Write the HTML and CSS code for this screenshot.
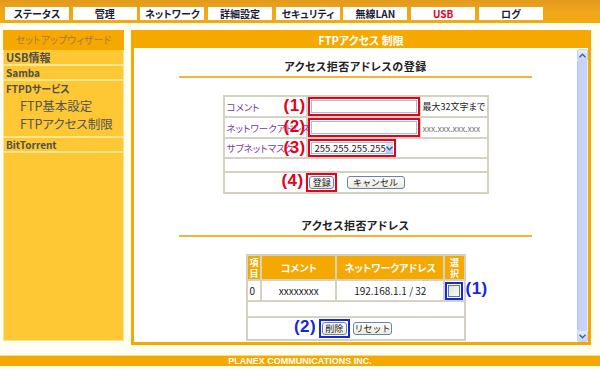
FILE: index.html
```html
<!DOCTYPE html>
<html lang="ja">

<head>
    <meta charset="UTF-8">
    <title>FTPアクセス制限</title>
    <link rel="stylesheet" href="styles.css">
</head>

<body>
    <div class="header">
        <span class="tab">ステータス</span>
        <span class="tab">管理</span>
        <span class="tab">ネットワーク</span>
        <span class="tab">詳細設定</span>
        <span class="tab">セキュリティ</span>
        <span class="tab">無線LAN</span>
        <span class="tab tab-active">USB</span>
        <span class="tab">ログ</span>
    </div>

    <div class="layout">
        <div class="sidebar">
            <div class="side-head">セットアップウィザード</div>
            <div class="side-item">USB情報</div>
            <div class="side-item">Samba</div>
            <div class="side-group">
                <div class="side-group-title">FTPDサービス</div>
                <div class="side-sub">FTP基本設定</div>
                <div class="side-sub">FTPアクセス制限</div>
            </div>
            <div class="side-item">BitTorrent</div>
        </div>

        <div class="panel">
            <div class="panel-title">FTPアクセス 制限</div>
            <div class="panel-body">
                <div class="content">
                    <div class="section-title">アクセス拒否アドレスの登録</div>
                    <table class="form-table">
                        <colgroup>
                            <col class="c-label">
                            <col class="c-field">
                            <col>
                        </colgroup>
                        <tr class="row-input">
                            <td class="label">コメント</td>
                            <td class="field">
                                <span class="num red">(1)</span>
                                <span class="mark-red"><input class="text-input" type="text"></span>
                            </td>
                            <td class="note">最大32文字まで</td>
                        </tr>
                        <tr class="row-input">
                            <td class="label">ネットワークアドレス</td>
                            <td class="field">
                                <span class="num red">(2)</span>
                                <span class="mark-red"><input class="text-input" type="text"></span>
                            </td>
                            <td class="note note-gray">xxx.xxx.xxx.xxx</td>
                        </tr>
                        <tr class="row-select">
                            <td class="label">サブネットマスク</td>
                            <td class="field" colspan="2">
                                <span class="num red">(3)</span>
                                <span class="mark-red">
                                    <span class="fake-select">
                                        <span class="fake-select-text">255.255.255.255</span>
                                        <span class="fake-select-arrow">
                                            <svg width="7" height="5" viewBox="0 0 7 5">
                                                <path d="M0.5 0.8 L3.5 3.8 L6.5 0.8" fill="none" stroke="#4d6185" stroke-width="1.5"/>
                                            </svg>
                                        </span>
                                    </span>
                                </span>
                            </td>
                        </tr>
                        <tr class="row-empty">
                            <td colspan="3"></td>
                        </tr>
                        <tr class="row-buttons">
                            <td colspan="3">
                                <span class="btn-wrap">
                                    <span class="num num-btn red">(4)</span>
                                    <span class="mark-red"><button class="btn btn-small">登録</button></span>
                                </span>
                                <button class="btn btn-cancel">キャンセル</button>
                            </td>
                        </tr>
                    </table>

                    <div class="section-title section-second">アクセス拒否アドレス</div>
                    <table class="list-table">
                        <tr class="list-head">
                            <th class="col-no">項<br>目</th>
                            <th class="col-comment">コメント</th>
                            <th class="col-addr">ネットワークアドレス</th>
                            <th class="col-sel">選<br>択</th>
                        </tr>
                        <tr class="list-row">
                            <td class="cell-no">0</td>
                            <td class="cell-center">xxxxxxxx</td>
                            <td class="cell-center">192.168.1.1 / 32</td>
                            <td class="cell-sel">
                                <span class="mark-blue"><span class="checkbox"></span></span>
                                <span class="num num-side blue">(1)</span>
                            </td>
                        </tr>
                        <tr class="list-empty">
                            <td colspan="4"></td>
                        </tr>
                        <tr class="list-buttons">
                            <td colspan="4">
                                <span class="btn-wrap">
                                    <span class="num num-btn blue">(2)</span>
                                    <span class="mark-blue"><button class="btn btn-small">削除</button></span>
                                </span>
                                <button class="btn btn-reset">リセット</button>
                            </td>
                        </tr>
                    </table>
                </div>

                <div class="scrollbar">
                    <div class="sb-btn">
                        <svg width="7" height="5" viewBox="0 0 7 5">
                            <path d="M0.5 4.2 L3.5 1.2 L6.5 4.2" fill="none" stroke="#4d6185" stroke-width="1.5"/>
                        </svg>
                    </div>
                    <div class="sb-track"></div>
                    <div class="sb-btn">
                        <svg width="7" height="5" viewBox="0 0 7 5">
                            <path d="M0.5 0.8 L3.5 3.8 L6.5 0.8" fill="none" stroke="#4d6185" stroke-width="1.5"/>
                        </svg>
                    </div>
                </div>
            </div>
        </div>
    </div>

    <div class="footer">PLANEX COMMUNICATIONS INC.</div>
</body>

</html>
```

FILE: styles.css
```css
body {
    margin: 0;
    background-color: #fffef2;
    font-family: "Noto Sans CJK JP", "Liberation Sans", sans-serif;
    font-feature-settings: "palt";
    color: #222;
}

/* top menu */
.header {
    height: 23px;
    box-sizing: border-box;
    padding: 7px 0 0 5px;
    display: flex;
    gap: 3.7px;
    background: linear-gradient(#e29a1c, #f2a818 60%, #f3a90f);
}

.tab {
    width: 64px;
    height: 13px;
    background: #fff;
    font-size: 10px;
    font-weight: bold;
    line-height: 13px;
    text-align: center;
    color: #1d1d3a;
}

.tab-active {
    color: #e0001e;
}

.layout {
    display: flex;
    gap: 7px;
    margin-top: 7px;
    padding-left: 3px;
}

/* left menu */
.sidebar {
    width: 121px;
    height: 311px;
    background: #fdc834;
    box-shadow: inset 0 0 0 1px #ffe28e;
}

.side-head {
    height: 20px;
    background: #f5a800;
    color: #a8784a;
    font-size: 10px;
    line-height: 20px;
    text-align: center;
}

.side-item,
.side-group {
    border-bottom: 2px solid #ffe58e;
    padding-left: 3px;
    color: #4f4f4f;
}

.side-item {
    font-size: 10px;
    font-weight: bold;
    line-height: 13px;
    height: 13px;
}

.side-item:nth-child(2) {
    height: 14px;
    line-height: 14px;
    font-size: 11px;
}

.side-group {
    height: 55px;
}

.side-group-title {
    font-size: 10px;
    font-weight: bold;
    line-height: 16px;
}

.side-sub {
    padding-left: 14px;
    font-size: 12.5px;
    line-height: 18px;
    color: #555;
}

/* main panel */
.panel {
    width: 460px;
    height: 315px;
    box-sizing: border-box;
    border: 3px solid #f5a800;
    display: flex;
    flex-direction: column;
}

.panel-title {
    height: 15px;
    background: #f5a800;
    color: #fff;
    font-size: 11px;
    font-weight: bold;
    line-height: 14px;
    text-align: center;
}

.panel-body {
    flex: 1;
    display: flex;
    background: #fff;
}

.content {
    flex: 1;
}

.section-title {
    width: 353px;
    margin: 0 auto 17px;
    padding: 11px 0 3px;
    border-bottom: 2px solid #f6b23a;
    font-size: 11px;
    font-weight: bold;
    line-height: 14px;
    text-align: center;
    letter-spacing: 0.5px;
}

.section-second {
    margin-top: 13px;
    margin-bottom: 17px;
}

/* registration form */
.form-table,
.list-table {
    margin: 0 auto;
    border-collapse: collapse;
    border: 2px solid #d6d2c2;
    font-size: 10px;
}

.form-table {
    width: 266px;
    table-layout: fixed;
}

.c-label {
    width: 83px;
}

.c-field {
    width: 113px;
}

.form-table td {
    border: 2px solid #d6d2c2;
    padding: 0;
}

.row-input td {
    height: 18px;
}

.row-select td {
    height: 16px;
}

.row-empty td {
    height: 12px;
}

.row-buttons td {
    height: 18px;
    text-align: center;
}

.label {
    padding-left: 2px !important;
    color: #7a3a98;
    font-size: 9.5px;
    white-space: nowrap;
}

.field {
    position: relative;
}

.note {
    padding-left: 2px !important;
    font-size: 9px;
    white-space: nowrap;
}

.note-gray {
    color: #777;
    font-size: 8.5px;
}

.num {
    position: absolute;
    font-family: "Liberation Sans", sans-serif;
    font-weight: bold;
    font-size: 17px;
    line-height: 18px;
    letter-spacing: 0.5px;
}

.field .num {
    left: -24px;
    top: 0;
}

.red {
    color: #e5001b;
}

.blue {
    color: #1428dc;
}

.mark-red,
.mark-blue {
    display: inline-block;
    vertical-align: middle;
    padding: 1px;
}

.mark-red {
    border: 2px solid #e5001b;
}

.mark-blue {
    border: 2px solid #1428dc;
}

.text-input {
    display: block;
    width: 106px;
    height: 13px;
    box-sizing: border-box;
    margin: 0;
    border: 1px solid #a9bdd4;
    padding: 0;
}

.fake-select {
    display: flex;
    align-items: center;
    justify-content: space-between;
    width: 82px;
    height: 12px;
    box-sizing: border-box;
    border: 1px solid #a9bdd4;
    padding-left: 3px;
    font-size: 9.5px;
    line-height: 10px;
}

.fake-select-arrow {
    width: 11px;
    height: 10px;
    display: flex;
    align-items: center;
    justify-content: center;
    background: linear-gradient(#dbe5fd, #b8cbf7);
}

.btn-wrap {
    position: relative;
    display: inline-block;
    vertical-align: middle;
}

.num-btn {
    left: -25px;
    top: -1px;
}

.btn {
    display: block;
    height: 13px;
    box-sizing: border-box;
    margin: 0;
    padding: 0;
    border: 1px solid #6884a8;
    border-radius: 3px;
    background: linear-gradient(#fefefe, #ece9dc);
    font-family: inherit;
    font-size: 9px;
    line-height: 11px;
    text-align: center;
    white-space: nowrap;
    color: #222;
}

.btn-small {
    width: 25px;
}

.btn-cancel {
    display: inline-block;
    vertical-align: middle;
    width: 58px;
    margin-left: 7px;
}

.btn-reset {
    display: inline-block;
    vertical-align: middle;
    width: 39px;
    margin-left: 1px;
}

/* deny list */
.list-table {
    width: 220px;
}

.list-table th,
.list-table td {
    border: 2px solid #d6d2c2;
    padding: 0;
}

.list-head th {
    height: 23px;
    background: #f5a800;
    color: #fff;
    font-size: 10px;
    font-weight: bold;
    line-height: 10px;
}

.list-head .col-no,
.list-head .col-sel {
    font-size: 9px;
    line-height: 11px;
}

.col-no {
    width: 13px;
}

.col-comment {
    width: 73px;
}

.col-addr {
    width: 107px;
}

.col-sel {
    width: 16px;
}

.list-row td {
    height: 17px;
}

.cell-no {
    padding-left: 2px !important;
}

.cell-center {
    text-align: center;
}

.cell-sel {
    position: relative;
}

.checkbox {
    display: block;
    width: 10px;
    height: 10px;
    border: 1px solid #587aa0;
    background: linear-gradient(135deg, #e2e1d9, #fbfbf8);
}

.num-side {
    left: 20px;
    top: -1px;
}

.list-empty td {
    height: 14px;
}

.list-buttons td {
    height: 21px;
    text-align: center;
}

/* scrollbar */
.scrollbar {
    width: 11px;
    margin-top: 1px;
    display: flex;
    flex-direction: column;
}

.sb-btn {
    height: 12px;
    box-sizing: border-box;
    border: 1px solid #c2d2f6;
    border-radius: 2px;
    background: linear-gradient(#e6eefe, #c6d5fa);
    display: flex;
    align-items: center;
    justify-content: center;
}

.sb-track {
    flex: 1;
    background: #c5d3fb;
    border-left: 1px solid #b3c3ef;
    border-right: 1px solid #e4ebfd;
}

/* bottom bar */
.footer {
    margin-top: 10px;
    height: 10px;
    background: #f5a800;
    border-top: 1px solid #fbd98a;
    color: #fff;
    font-family: "Liberation Sans", sans-serif;
    font-size: 9px;
    font-weight: bold;
    line-height: 10px;
    text-align: center;
}
```
